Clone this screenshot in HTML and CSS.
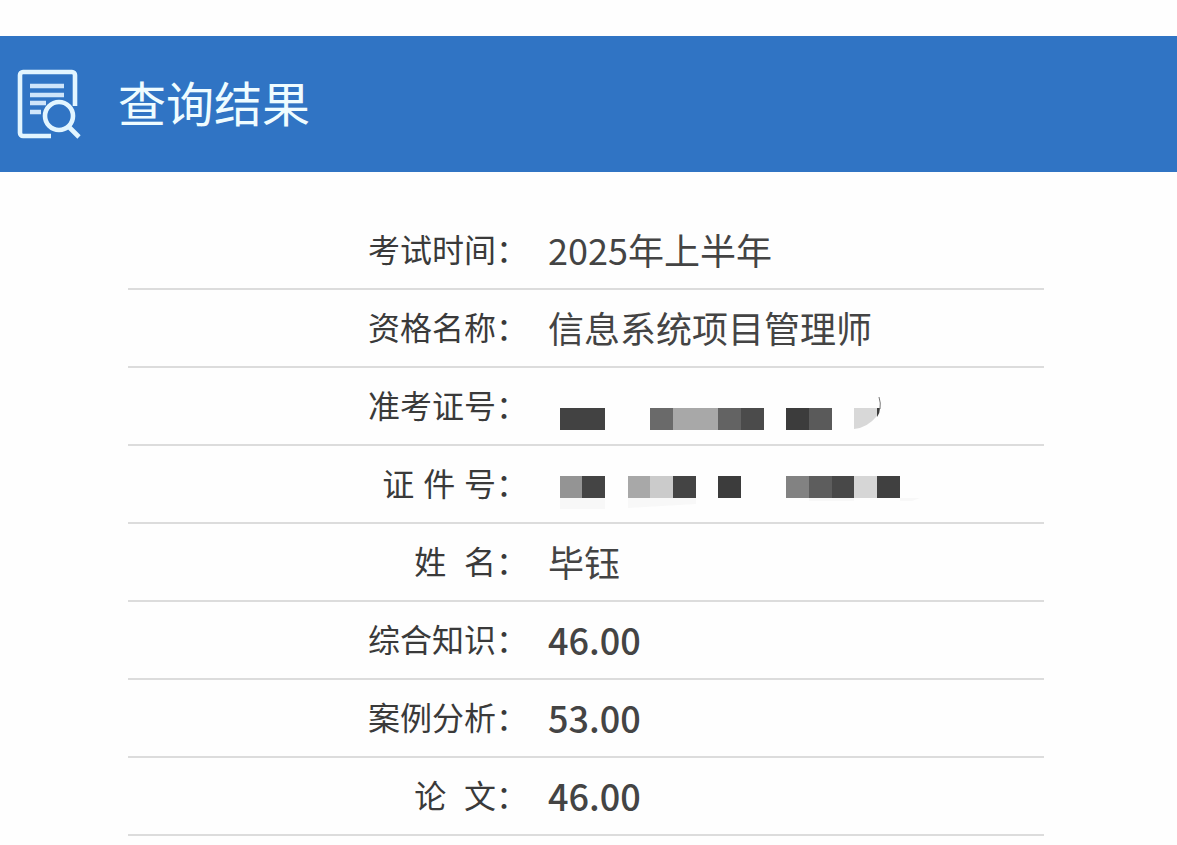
FILE: index.html
```html
<!DOCTYPE html>
<html lang="zh-CN">
<head>
    <meta charset="UTF-8">
    <meta name="viewport" content="width=device-width, initial-scale=1.0">
    <title>查询结果</title>
    <link rel="stylesheet" href="styles.css">
</head>
<body>
    <header class="header">
        <svg class="header-icon" viewBox="0 0 64 70" fill="none" stroke="#e2f5ff" stroke-width="4.6" aria-hidden="true">
            <path d="M58 37V6a3 3 0 0 0-3-3H6a3 3 0 0 0-3 3v58a3 3 0 0 0 3 3h28"/>
            <path d="M13 17h34M13 26h34M13 34h16M13 43h11" stroke="#cfe5fa"/>
            <circle cx="42" cy="47" r="14"/>
            <path d="M51 57l11 11"/>
        </svg>
        <h1>查询结果</h1>
    </header>

    <main class="result">
        <table class="result-table">
            <tbody>
                <tr>
                    <th scope="row">考试时间：</th>
                    <td>2025年上半年</td>
                </tr>
                <tr>
                    <th scope="row">资格名称：</th>
                    <td>信息系统项目管理师</td>
                </tr>
                <tr>
                    <th scope="row">准考证号：</th>
                    <td>
                        <svg class="mosaic" width="380" height="52" viewBox="1 -1 380 52" aria-hidden="true">
                            <path fill="#424242" d="M13 28h45v22H13z"/>
                            <path fill="#6a6a6a" d="M103 28h23v22h-23z"/>
                            <path fill="#a8a8a8" d="M126 28h45v22h-45z"/>
                            <path fill="#636363" d="M171 28h23v22h-23z"/>
                            <path fill="#4b4b4b" d="M194 28h23v22h-23z"/>
                            <path fill="#3c3c3c" d="M239 28h23v22h-23z"/>
                            <path fill="#5a5a5a" d="M262 28h23v22h-23z"/>
                            <path fill="#d8d8d8" d="M307 28h23v8q-10 12-23 13z"/>
                            <path fill="#3c3c3c" d="M330 28h3q0 5-3 9z"/>
                            <path fill="none" stroke="#777" d="M332 17q2 6 1 12"/>
                        </svg>
                    </td>
                </tr>
                <tr>
                    <th scope="row">证 件 号：</th>
                    <td>
                        <svg class="mosaic" width="380" height="52" viewBox="1 -1 380 52" aria-hidden="true">
                            <path fill="#f8f8f8" d="M13 40h45v11H13zM81 40h68v6l-68 4zM262 40h45v3h-45zM353 40h20l-8 3h-12z"/>
                            <path fill="#949494" d="M13 18h22v22H13z"/>
                            <path fill="#444" d="M35 18h23v22H35z"/>
                            <path fill="#a8a8a8" d="M81 18h22v22H81z"/>
                            <path fill="#cbcbcb" d="M103 18h23v22h-23z"/>
                            <path fill="#444" d="M126 18h23v22h-23z"/>
                            <path fill="#3c3c3c" d="M171 18h23v22h-23z"/>
                            <path fill="#828282" d="M239 18h23v22h-23z"/>
                            <path fill="#5d5d5d" d="M262 18h23v22h-23z"/>
                            <path fill="#484848" d="M285 18h22v22h-22z"/>
                            <path fill="#d6d6d6" d="M307 18h23v22h-23z"/>
                            <path fill="#404040" d="M330 18h23v22h-23z"/>
                        </svg>
                    </td>
                </tr>
                <tr>
                    <th scope="row">姓&nbsp; 名：</th>
                    <td>毕钰</td>
                </tr>
                <tr>
                    <th scope="row">综合知识：</th>
                    <td class="score">46.00</td>
                </tr>
                <tr>
                    <th scope="row">案例分析：</th>
                    <td class="score">53.00</td>
                </tr>
                <tr>
                    <th scope="row">论&nbsp; 文：</th>
                    <td class="score">46.00</td>
                </tr>
            </tbody>
        </table>
    </main>
</body>
</html>
```

FILE: styles.css
```css
* {
    box-sizing: border-box;
}

body {
    margin: 0;
    padding-top: 36px;
    background: #fefefe;
    color: #444;
    font-family: "Noto Sans CJK SC", sans-serif;
}

.header {
    display: flex;
    align-items: center;
    gap: 37px;
    height: 136px;
    padding: 0 17px;
    background: #3074c4;
}

.header-icon {
    width: 64px;
    height: 70px;
}

.header h1 {
    margin: 0;
    padding-bottom: 6px;
    color: #effcff;
    font-size: 48px;
    font-weight: 400;
    line-height: 72px;
}

.result {
    padding: 40px 133px 0 128px;
}

.result-table {
    width: 100%;
    border-collapse: separate;
    border-spacing: 0;
    table-layout: fixed;
}

.result-table th,
.result-table td {
    height: 78px;
    border-bottom: 2px solid #dcdcdc;
    font-weight: 400;
    line-height: 48px;
    vertical-align: middle;
}

/* the Latin font comes first so that the spaces in short labels are wide enough */
.result-table th {
    width: 44%;
    padding: 2px 3px 0 0;
    color: #3a3a3a;
    font-family: "Liberation Sans", "Noto Sans CJK SC", sans-serif;
    font-size: 32px;
    text-align: right;
}

.result-table td {
    padding: 0 0 2px 17px;
    font-size: 36px;
}

.result-table .score {
    font-weight: 500;
}

.mosaic {
    display: block;
}
```
